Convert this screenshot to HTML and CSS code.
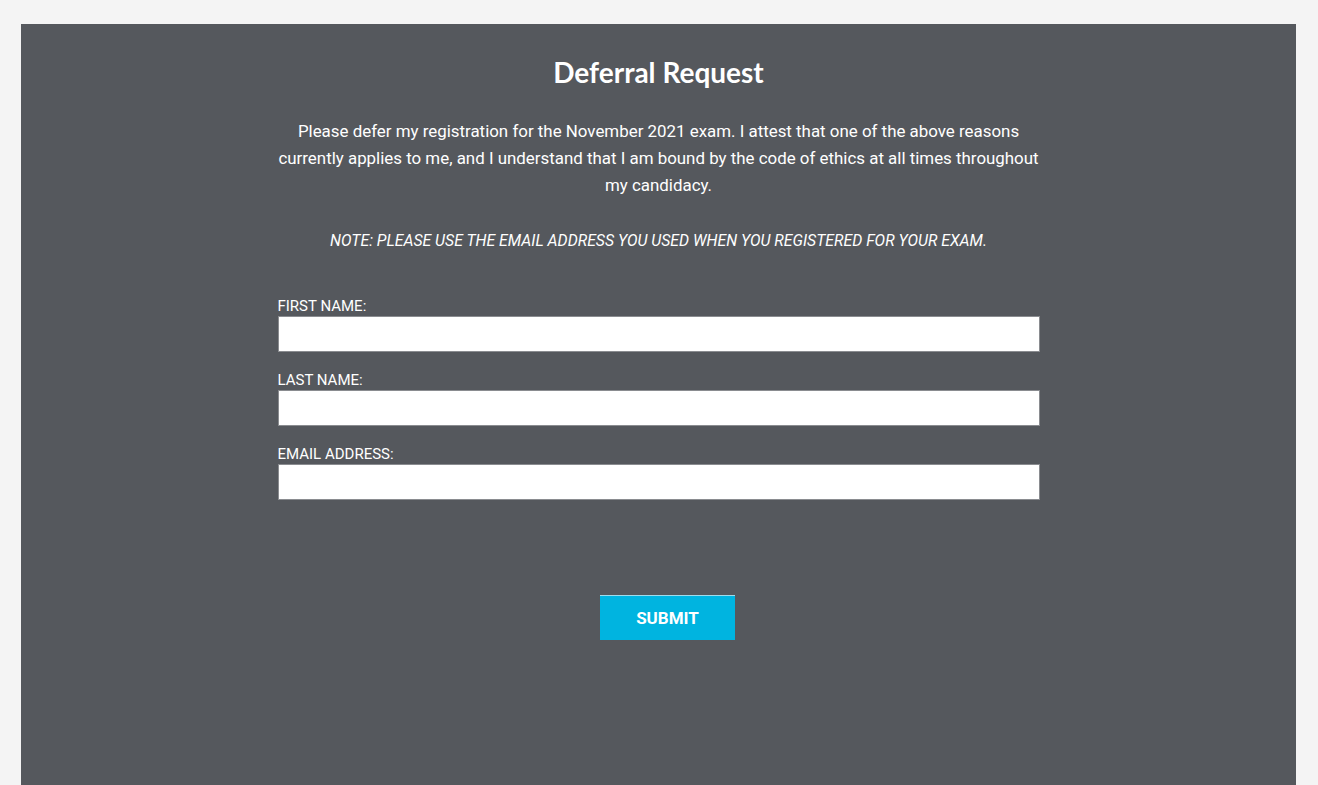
FILE: index.html
```html
<!DOCTYPE html>
<html lang="en">
<head>
<meta charset="utf-8">
<title>Deferral Request</title>
<link rel="stylesheet" href="styles.css">
</head>
<body>
<main class="panel">
  <form class="form">
    <h1 class="title">Deferral Request</h1>
    <p class="intro">Please defer my registration for the November 2021 exam. I attest that one of the above reasons<br>currently applies to me, and I understand that I am bound by the code of ethics at all times throughout<br>my candidacy.</p>
    <p class="note">NOTE: PLEASE USE THE EMAIL ADDRESS YOU USED WHEN YOU REGISTERED FOR YOUR EXAM.</p>
    <div class="fields">
      <label class="field"><span class="label">FIRST NAME:</span><input class="input" type="text"></label>
      <label class="field"><span class="label">LAST NAME:</span><input class="input" type="text"></label>
      <label class="field"><span class="label">EMAIL ADDRESS:</span><input class="input" type="email"></label>
    </div>
    <div class="actions"><button class="submit" type="button">SUBMIT</button></div>
  </form>
</main>
</body>
</html>
```
FILE: styles.css
```css
html, body {
  margin: 0;
  padding: 0;
  background: #f4f4f4;
}
body {
  padding: 24px 22px 0 21px;
  font-family: Roboto, "Liberation Sans", sans-serif;
  color: #ffffff;
  overflow: hidden;
  height: 785px;
  box-sizing: border-box;
}
.panel {
  background: #55585d;
  height: 761px;
  padding-top: 33px;
  box-sizing: border-box;
  display: flex;
  justify-content: center;
}
.form {
  width: 762px;
  display: flex;
  flex-direction: column;
}
.title {
  margin: 0;
  font-family: Lato, "Liberation Sans", sans-serif;
  font-weight: 700;
  font-size: 28px;
  line-height: 30px;
  text-align: center;
}
.intro {
  margin: 31px -10px 0;
  font-size: 16.9px;
  line-height: 27px;
  text-align: center;
  white-space: nowrap;
}
.note {
  margin: 28px 0 0;
  font-size: 15.8px;
  line-height: 27px;
  font-style: italic;
  text-align: center;
}
.fields {
  margin-top: 42px;
  display: flex;
  flex-direction: column;
  gap: 18px;
}
.field {
  display: flex;
  flex-direction: column;
}
.label {
  font-size: 15px;
  line-height: 20px;
}
.input {
  height: 36px;
  box-sizing: border-box;
  margin: 0;
  border: 1px solid #8a8c90;
  background: #fff;
  padding: 0 8px;
  font-size: 16px;
}
.actions {
  margin-top: 95px;
  display: flex;
  justify-content: center;
  padding-left: 18px;
}
.submit {
  width: 135px;
  height: 45px;
  background: #00b4e0;
  border: none;
  border-top: 1px solid #9fdcec;
  color: #fff;
  font-family: Roboto, "Liberation Sans", sans-serif;
  font-weight: 700;
  font-size: 17px;
  cursor: pointer;
}
```
